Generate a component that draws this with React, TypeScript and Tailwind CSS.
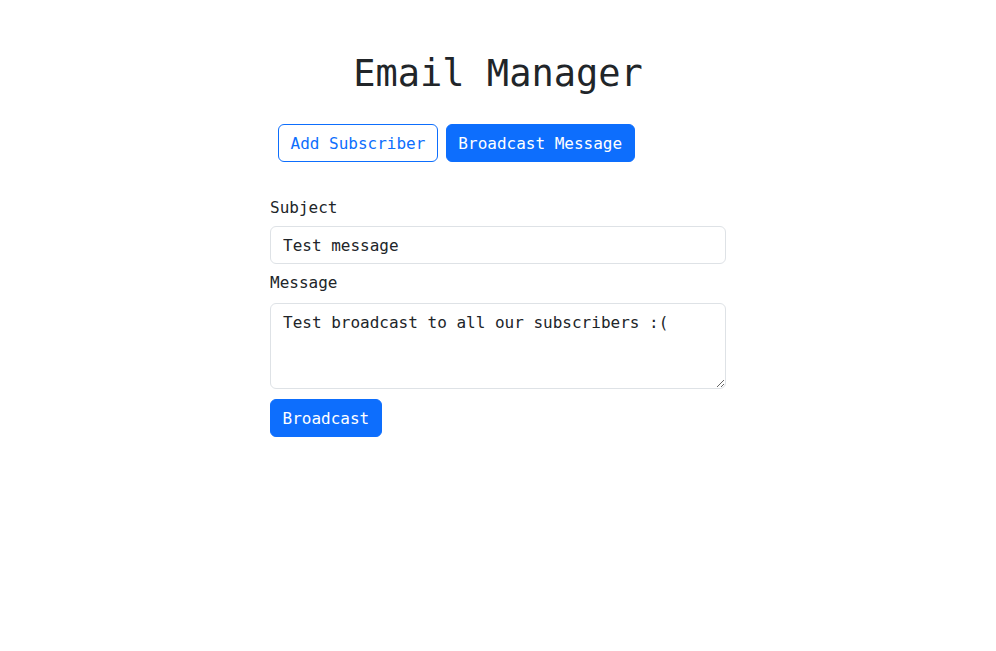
import { useState } from 'react';

const mono = 'font-["DejaVu_Sans_Mono",monospace]';

export default function App() {
  const [tab, setTab] = useState<'add' | 'broadcast'>('broadcast');
  const [subject, setSubject] = useState('Test message');
  const [message, setMessage] = useState('Test broadcast to all our subscribers :(');

  return (
    <div className={`min-h-screen bg-white text-[#212529] ${mono}`}>
      <div className="mx-auto w-[456px] pt-[52px]">
        <h1 className="text-center text-[37px] leading-[1.2] font-medium">Email Manager</h1>

        <div className="mt-[28px] flex gap-2 pl-2">
          <button
            onClick={() => setTab('add')}
            className={
              tab === 'add'
                ? 'h-[38px] rounded-md border border-[#0d6efd] bg-[#0d6efd] px-[11.5px] pt-px text-base text-white'
                : 'h-[38px] rounded-md border border-[#0d6efd] bg-white px-[11.5px] pt-px text-base text-[#0d6efd]'
            }
          >
            Add Subscriber
          </button>
          <button
            onClick={() => setTab('broadcast')}
            className={
              tab === 'broadcast'
                ? 'h-[38px] rounded-md border border-[#0d6efd] bg-[#0d6efd] px-[11.5px] pt-px text-base text-white'
                : 'h-[38px] rounded-md border border-[#0d6efd] bg-white px-[11.5px] pt-px text-base text-[#0d6efd]'
            }
          >
            Broadcast Message
          </button>
        </div>

        <form className="mt-[34px]" onSubmit={(e) => e.preventDefault()}>
          <label className="mb-[6px] block text-base leading-6">Subject</label>
          <input
            value={subject}
            onChange={(e) => setSubject(e.target.value)}
            className="block h-[38px] w-full rounded-md border border-[#dee2e6] px-3 text-base leading-6 outline-none"
          />
          <label className="mt-[7px] mb-2 block text-base leading-6">Message</label>
          <textarea
            rows={3}
            value={message}
            onChange={(e) => setMessage(e.target.value)}
            className="block h-[86px] w-full rounded-md border border-[#dee2e6] px-3 pt-[7px] pb-[5px] text-base leading-6 outline-none"
          />
          <button
            type="submit"
            className="mt-[10px] h-[38px] rounded-md border border-[#0d6efd] bg-[#0d6efd] px-[11.5px] pt-px text-base text-white"
          >
            Broadcast
          </button>
        </form>
      </div>
    </div>
  );
}
